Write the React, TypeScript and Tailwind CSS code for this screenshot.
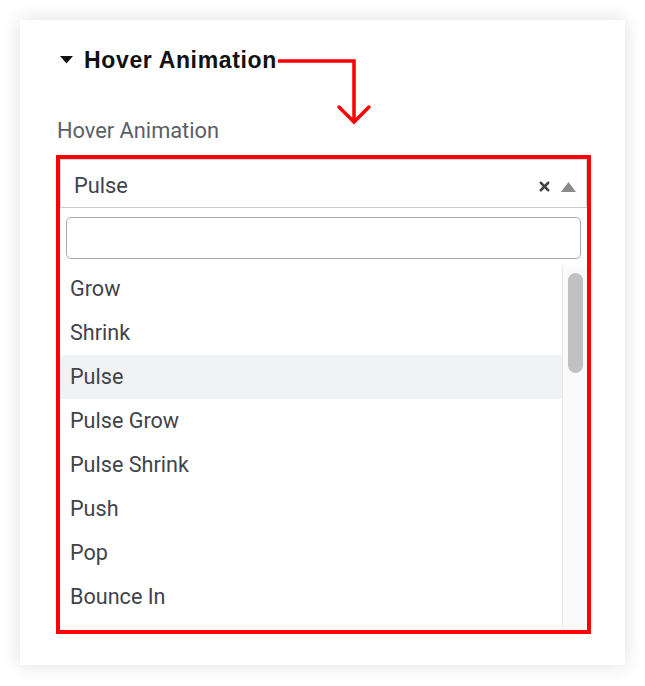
import { X } from 'lucide-react';

const options = ['Grow', 'Shrink', 'Pulse', 'Pulse Grow', 'Pulse Shrink', 'Push', 'Pop', 'Bounce In', 'Bounce Out'];

export default function App() {
  return (
    <div className="relative w-[645px] h-[686px] bg-white pt-[20px] pl-[20px]" style={{ fontFamily: 'Roboto, "Liberation Sans", sans-serif' }}>
      <div className="w-[605px] h-[645px] bg-white shadow-[0_0_18px_rgba(0,0,0,0.13)] pt-[26px] pl-[36px]">
        {/* section heading */}
        <div className="flex items-center h-[28px] ml-[4px]">
          <svg width="13" height="8" viewBox="0 0 13 8" className="mr-[11px]">
            <path d="M0 0 H13 L6.5 7.5 Z" fill="#111" />
          </svg>
          <span className="text-[23px] font-bold tracking-[0.65px] text-[#111]" style={{ fontFamily: '"Liberation Sans", Arial, sans-serif' }}>
            Hover Animation
          </span>
        </div>

        <div className="mt-[45px] ml-[1px] text-[21.8px] leading-[24px] text-[#5a5f66]">Hover Animation</div>

        {/* highlighted select */}
        <div className="mt-[12px] w-[535px] h-[479px] border-4 border-[#ff0000] overflow-hidden">
          <div className="flex items-center h-[49px] border border-[#d5d8dc] border-b-[#c8cbd0] pt-[6px] pl-[13px] pr-[10px]">
            <span className="flex-1 text-[21.8px] text-[#3f444b]">Pulse</span>
            <X size={15} strokeWidth={4} className="text-[#3f444b] mr-[9px]" />
            <svg width="15" height="10" viewBox="0 0 15 10">
              <path d="M0 10 L7.5 0 L15 10 Z" fill="#8a8a8a" />
            </svg>
          </div>
          <div className="px-[6px] pt-[9px] pb-[8px]">
            <div className="h-[42px] rounded-[5px] border border-[#aaaaaa] bg-white" />
          </div>
          <div className="flex">
            <div className="flex-1">
              {options.map((o) => (
                <div
                  key={o}
                  className={`h-[44px] flex items-center pl-[10px] text-[21.6px] text-[#3f444b] ${o === 'Pulse' ? 'bg-[#f1f2f3]' : ''}`}
                >
                  {o}
                </div>
              ))}
            </div>
            <div className="w-[25px] bg-[#fafafa] border-l border-[#e6e6e6] pt-[6px] pl-[5px]">
              <div className="w-[15px] h-[100px] rounded-full bg-[#c1c1c1]" />
            </div>
          </div>
        </div>
      </div>

      {/* annotation arrow */}
      <svg className="absolute left-0 top-0 pointer-events-none" width="645" height="686">
        <path d="M278 61 H354 V122" fill="none" stroke="#ff0000" strokeWidth="3.5" />
        <path d="M339 107 L354 122 L369 107" fill="none" stroke="#ff0000" strokeWidth="3.5" strokeLinecap="round" />
      </svg>
    </div>
  );
}
